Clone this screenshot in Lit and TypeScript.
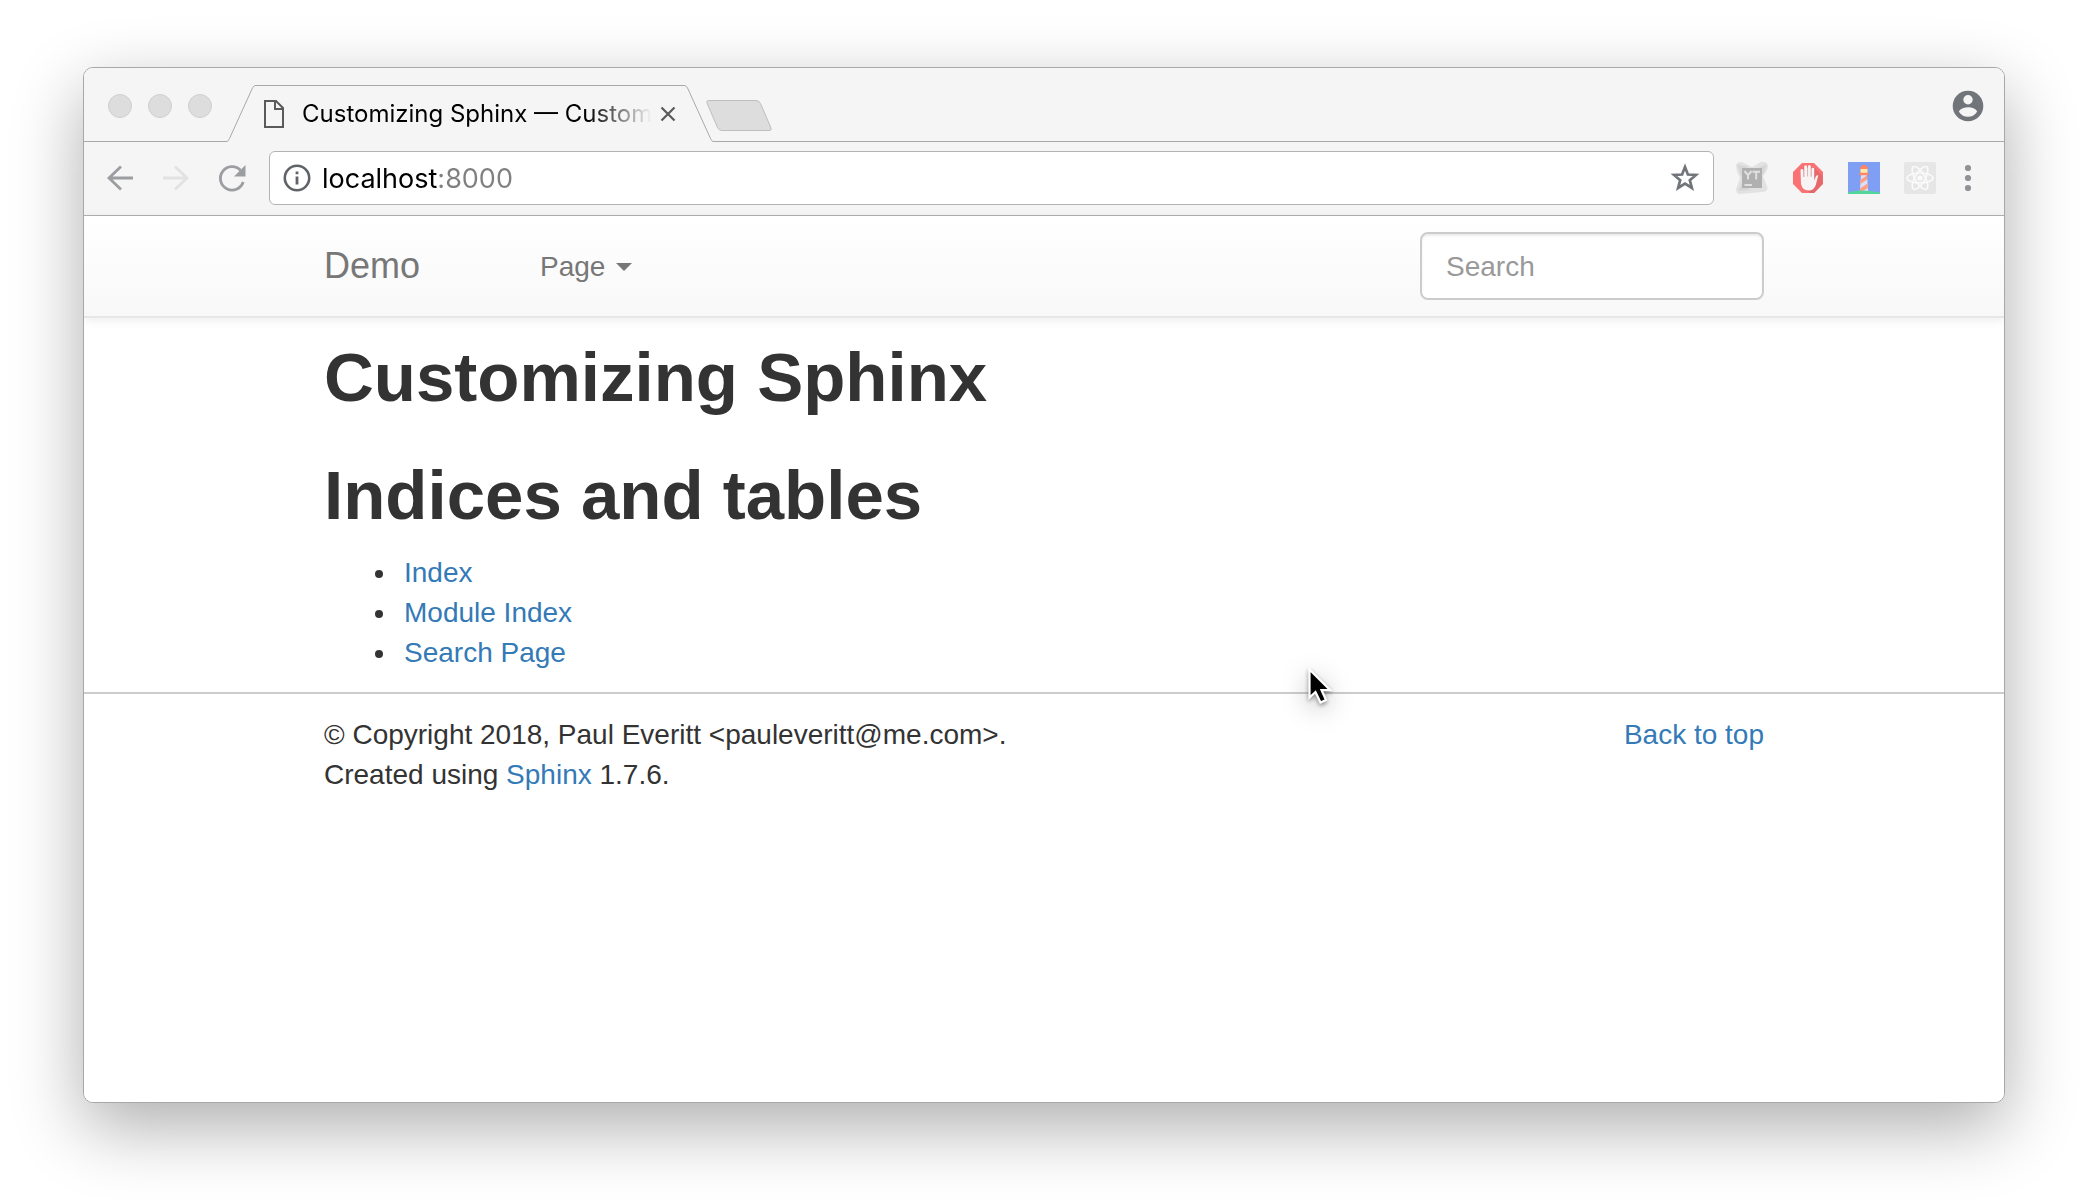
import { LitElement, html, css, svg } from "lit";
import { customElement, state } from "lit/decorators.js";

const petal = (angle: number) => svg`
  <ellipse cx="16" cy="16" rx="13" ry="5" transform="rotate(${angle} 16 16)"
    fill="none" stroke="#fafafa" stroke-width="1.6"></ellipse>`;

@customElement("browser-tabs")
class BrowserTabs extends LitElement {
  static styles = css`
    :host {
      display: block;
      font-family: Inter, "Liberation Sans", sans-serif;
    }
    .strip {
      display: flex;
      align-items: flex-end;
      height: 74px;
      box-sizing: border-box;
      padding: 0 20px 0 24px;
      background: #f5f5f5;
      border-bottom: 1px solid #a9a9a9;
    }
    .lights {
      display: flex;
      gap: 16px;
      align-self: center;
      padding-top: 2px;
      margin-right: 14px;
    }
    button {
      padding: 0;
      border: 0;
      background: none;
      font: inherit;
      color: inherit;
    }
    .light {
      width: 24px;
      height: 24px;
      box-sizing: border-box;
      border: 1px solid #cfcfcf;
      border-radius: 50%;
      background: #dddddd;
    }
    .tab {
      position: relative;
      display: flex;
      align-items: center;
      width: 488px;
      height: 57px;
      box-sizing: border-box;
      margin-bottom: -1px;
      padding: 0 38px;
    }
    .shape {
      position: absolute;
      inset: 0;
    }
    .file,
    .title,
    .close {
      position: relative;
    }
    .title {
      margin-left: 18px;
      white-space: nowrap;
      font-size: 24px;
      line-height: 32px;
      color: #000;
      -webkit-mask-image: linear-gradient(to left, transparent, #000 64px);
      mask-image: linear-gradient(to left, transparent, #000 64px);
    }
    .close {
      display: flex;
      margin-left: auto;
    }
    .add {
      display: flex;
      align-self: center;
      padding-top: 22px;
      margin-left: -8px;
    }
    .account {
      display: flex;
      align-self: center;
      padding-top: 2px;
      margin-left: auto;
    }
    svg {
      display: block;
    }
  `;

  render() {
    return html`
      <div class="strip">
        <div class="lights">
          <button class="light" aria-label="Close window"></button>
          <button class="light" aria-label="Minimize window"></button>
          <button class="light" aria-label="Zoom window"></button>
        </div>
        <div class="tab">
          <svg class="shape" width="488" height="57" viewBox="0 0 488 57" aria-hidden="true">
            <path d="M0 56.5C2 56.5 2.500 55.500 3.500 53.500L26 4C27.500 1 28 .5 30 .5H458C460 .5 460.500 1 462 4L484.500 53.500C485.500 55.500 486 56.500 488 56.500V57H0Z" fill="#f5f5f5"/>
            <path d="M0 56.5C2 56.5 2.500 55.500 3.500 53.500L26 4C27.500 1 28 .5 30 .5H458C460 .5 460.500 1 462 4L484.500 53.500C485.500 55.500 486 56.500 488 56.500" fill="none" stroke="#a9a9a9"/>
          </svg>
          <svg class="file" width="20" height="28" viewBox="0 0 20 28" aria-hidden="true">
            <path d="M1 1H12L19 8V27H1Z" fill="none" stroke="#5a5a5a" stroke-width="2"/>
            <path d="M11 1V9H19" fill="none" stroke="#5a5a5a" stroke-width="2"/>
          </svg>
          <span class="title">Customizing Sphinx — Custom</span>
          <button class="close" aria-label="Close tab">
            <svg width="16" height="16" viewBox="0 0 16 16">
              <path d="M1.500 1.500L14.500 14.500M14.500 1.500L1.500 14.500" stroke="#5a5a5a" stroke-width="2.200"/>
            </svg>
          </button>
        </div>
        <button class="add" aria-label="New tab">
          <svg width="66" height="32" viewBox="0 0 66 32">
            <path d="M3 .5H50Q53 .5 54.500 3.500L65 28Q66 30.500 63 30.500H16Q13 30.500 11.500 27.500L1 3Q0 .5 3 .5Z" fill="#dddddd" stroke="#bdbdbd"/>
          </svg>
        </button>
        <button class="account" aria-label="Account">
          <svg width="32" height="32" viewBox="0 0 32 32">
            <circle cx="16" cy="16" r="15.300" fill="#71757a"/>
            <circle cx="16" cy="9.700" r="4.700" fill="#f5f5f5"/>
            <path d="M6.800 21.500C8.500 18.500 12.500 17.200 16 17.200S23.500 18.500 25.200 21.500C23.200 24.800 20 26.800 16 26.800S8.800 24.800 6.800 21.500Z" fill="#f5f5f5"/>
          </svg>
        </button>
      </div>
    `;
  }
}

@customElement("browser-toolbar")
class BrowserToolbar extends LitElement {
  @state() private address = "localhost:8000";

  static styles = css`
    :host {
      display: block;
      font-family: Inter, "Liberation Sans", sans-serif;
    }
    .bar {
      display: flex;
      align-items: center;
      gap: 24px;
      padding: 9px 28px 10px 20px;
      background: #f5f5f5;
      border-bottom: 1px solid #b0b0b0;
    }
    button {
      display: flex;
      padding: 0;
      border: 0;
      background: none;
    }
    svg {
      display: block;
    }
    .omnibox {
      flex: 1;
      display: flex;
      align-items: center;
      gap: 10px;
      height: 54px;
      box-sizing: border-box;
      margin-left: -3px;
      padding: 0 12px;
      background: #fff;
      border: 1px solid #b3b3b3;
      border-radius: 6px;
    }
    .address {
      flex: 1;
      min-width: 0;
      padding: 2px 0 0;
      border: 0;
      outline: 0;
      font: 27px/36px Inter, "Liberation Sans", sans-serif;
      color: transparent;
      background: linear-gradient(to right, #000 116px, #808080 116px);
      -webkit-background-clip: text;
      background-clip: text;
    }
    .extensions {
      display: flex;
      align-items: center;
      gap: 24px;
      margin-left: -2px;
    }
  `;

  private onInput(e: Event) {
    this.address = (e.target as HTMLInputElement).value;
  }

  render() {
    return html`
      <div class="bar">
        <button aria-label="Back">
          <svg width="32" height="32" viewBox="0 0 32 32" fill="none" stroke="#9b9da0" stroke-width="2.800">
            <path d="M29 16H5M17 4.500L5 16L17 27.500"/>
          </svg>
        </button>
        <button aria-label="Forward" disabled>
          <svg width="32" height="32" viewBox="0 0 32 32" fill="none" stroke="#e2e2e2" stroke-width="2.800">
            <path d="M3 16H27M15 4.500L27 16L15 27.500"/>
          </svg>
        </button>
        <button aria-label="Reload">
          <svg width="32" height="32" viewBox="0 0 32 32">
            <path d="M27.200 20A11.700 11.700 0 1 1 24.500 8.200" fill="none" stroke="#9b9da0" stroke-width="2.800"/>
            <path d="M29.500 3V14.500H18Z" fill="#9b9da0"/>
          </svg>
        </button>
        <div class="omnibox">
          <svg width="30" height="30" viewBox="0 0 30 30" aria-hidden="true">
            <circle cx="15" cy="15" r="12.200" fill="none" stroke="#5f6368" stroke-width="2.600"/>
            <path d="M13.600 8.500H16.400V11.300H13.600ZM13.600 13.500H16.400V21.500H13.600Z" fill="#5f6368"/>
          </svg>
          <input class="address" type="text" aria-label="Address" spellcheck="false" .value=${this.address} @input=${this.onInput} />
          <button aria-label="Bookmark this page">
            <svg width="32" height="32" viewBox="0 0 32 32">
              <path d="M16 5L18.900 12.500L27 13L20.800 18.200L22.900 26L16 21.700L9.100 26L11.200 18.200L5 13L13.100 12.500Z" fill="none" stroke="#71757a" stroke-width="2.700"/>
            </svg>
          </button>
        </div>
        <div class="extensions">
          <button aria-label="YouTrack">
            <svg width="32" height="32" viewBox="0 0 32 32">
              <path d="M0 4Q0 0 6 0L16 5L25 0Q31 -1 32 4Q32 8 27 14L31 24Q33 30 26 30L4 32Q0 32 0 27L4 16Q0 8 0 4Z" fill="#e2e2e2"/>
              <path d="M1 2L12 5L5 14ZM31 2L22 6L27 13ZM2 29L6 20L14 28Z" fill="#d6d6d6"/>
              <rect x="6" y="6" width="20" height="20" fill="#b0b0b0"/>
              <path d="M8.500 9L12 13.200L15.500 9M12 13V17.500M16.500 9.800H24M20.200 10V17.500" fill="none" stroke="#e0e0e0" stroke-width="2"/>
              <path d="M8.500 22H16V24H8.500Z" fill="#e0e0e0"/>
            </svg>
          </button>
          <button aria-label="Ad blocker">
            <svg width="32" height="32" viewBox="0 0 32 32">
              <path d="M10 1H22L31 10V22L22 31H10L1 22V10Z" fill="#fb7275"/>
              <path d="M18 31L11 25L9 6L22 5L30.500 14V22L22 31Z" fill="#e5686b"/>
              <path d="M8.500 8.500Q8.500 6.800 10 6.800T11.400 8.500V15H12.200V5Q12.200 3.300 13.700 3.300T15.200 5V14.300H16V4.500Q16 3 17.400 3T18.800 4.500V14.500H19.500V7Q19.500 5.400 20.900 5.400T22.200 7V18.500L23.800 14.500Q24.800 12.800 26.300 13.300L23.800 23Q22 28.500 16.500 28.500Q10.500 28.500 9 22Z" fill="#f6f4f4"/>
              <path d="M11.800 9V15M15.600 6V14.500M19.200 7V15" stroke="#d9c9ca" stroke-width=".8"/>
            </svg>
          </button>
          <button aria-label="Lighthouse">
            <svg width="32" height="32" viewBox="0 0 32 32">
              <rect width="32" height="32" fill="#7f9ff5"/>
              <path d="M13 13H19L20.200 30H11.800Z" fill="#dfe0f2"/>
              <path d="M12.700 17.500L19 13.500L19.200 17.500L12.400 22ZM12 26.500L19.500 21.500L19.900 26L13 30H11.800Z" fill="#ff9d85"/>
              <rect x="12.500" y="7" width="7" height="4.500" fill="#ffe9a3"/>
              <path d="M12 7Q12.300 3 16 3T20 7ZM11.500 10.800H20.500V13.300H11.500Z" fill="#ff8564"/>
              <path d="M0 32V30.500Q8 28 16 28.500T32 30.500V32Z" fill="#52d79b"/>
            </svg>
          </button>
          <button aria-label="React Developer Tools">
            <svg width="32" height="32" viewBox="0 0 32 32">
              <rect width="32" height="32" rx="2" fill="#e6e6e6"/>
              ${petal(0)}${petal(60)}${petal(120)}
              <circle cx="16" cy="16" r="2.600" fill="#fafafa"/>
            </svg>
          </button>
          <button aria-label="Menu">
            <svg width="16" height="32" viewBox="0 0 16 32" fill="#8f9296">
              <circle cx="8" cy="6" r="3.100"/>
              <circle cx="8" cy="16" r="3.100"/>
              <circle cx="8" cy="26" r="3.100"/>
            </svg>
          </button>
        </div>
      </div>
    `;
  }
}

@customElement("sphinx-page")
class SphinxPage extends LitElement {
  static styles = css`
    :host {
      display: block;
      flex: 1;
      background: #fff;
      color: #333;
      font: 28px/40px "Liberation Sans", Arial, sans-serif;
    }
    .container {
      width: 100%;
      max-width: 1500px;
      box-sizing: border-box;
      margin: 0 auto;
      padding: 0 30px;
    }
    .navbar {
      background: linear-gradient(to bottom, #ffffff, #f8f8f8);
      border-bottom: 2px solid #e7e7e7;
      box-shadow: 0 2px 10px rgba(0, 0, 0, 0.08);
    }
    .nav {
      display: flex;
      align-items: center;
      gap: 120px;
      height: 100px;
    }
    .brand {
      font-size: 36px;
      color: #777;
    }
    .dropdown {
      display: flex;
      align-items: center;
      gap: 11px;
      padding: 2px 0 0;
      border: 0;
      background: none;
      font: inherit;
      color: #777;
    }
    .caret {
      border-top: 8px solid #777;
      border-left: 8px solid transparent;
      border-right: 8px solid transparent;
    }
    .search {
      margin-left: auto;
    }
    .field {
      display: block;
      width: 344px;
      height: 68px;
      box-sizing: border-box;
      padding: 2px 24px 0;
      border: 2px solid #ccc;
      border-radius: 8px;
      background: #fff;
      box-shadow: inset 0 2px 2px rgba(0, 0, 0, 0.075);
      font: inherit;
      color: #555;
    }
    .field::placeholder {
      color: #999;
      opacity: 1;
    }
    a {
      color: #337ab7;
      text-decoration: none;
    }
    .content {
      padding-top: 20px;
    }
    h1 {
      margin: 0;
      font-size: 69px;
      font-weight: 700;
      line-height: 79px;
    }
    h1 + h1 {
      margin-top: 39px;
    }
    ul {
      margin: 18px 0 19px;
      padding-left: 74px;
    }
    li {
      padding-left: 6px;
    }
    footer {
      padding: 21px 0;
      border-top: 2px solid #ccc;
    }
    .foot {
      display: flex;
      justify-content: space-between;
      align-items: flex-start;
    }
    .foot p {
      margin: 0;
    }
  `;

  private links = ["Index", "Module Index", "Search Page"];

  render() {
    return html`
      <nav class="navbar">
        <div class="container nav">
          <a class="brand" href="#">Demo</a>
          <button class="dropdown" aria-haspopup="true">Page<span class="caret"></span></button>
          <form class="search" role="search">
            <input class="field" type="text" placeholder="Search" aria-label="Search" />
          </form>
        </div>
      </nav>
      <main class="container content">
        <h1>Customizing Sphinx</h1>
        <h1>Indices and tables</h1>
        <ul>
          ${this.links.map((l) => html`<li><a href="#">${l}</a></li>`)}
        </ul>
      </main>
      <footer>
        <div class="container foot">
          <p>
            © Copyright 2018, Paul Everitt &lt;pauleveritt@me.com&gt;.<br />
            Created using <a href="#">Sphinx</a> 1.7.6.
          </p>
          <a href="#">Back to top</a>
        </div>
      </footer>
    `;
  }
}

@customElement("app-root")
class AppRoot extends LitElement {
  static styles = css`
    :host {
      display: flex;
      min-height: 100vh;
      box-sizing: border-box;
      padding: 67px 83px 99px;
      background: #fff;
    }
    .window {
      flex: 1;
      display: flex;
      flex-direction: column;
      min-width: 0;
      overflow: hidden;
      border: 1px solid #a8a8a8;
      border-radius: 10px;
      background: #fff;
      box-shadow: 0 24px 70px rgba(0, 0, 0, 0.32);
    }
    .pointer {
      position: absolute;
      left: 1302px;
      top: 659px;
      pointer-events: none;
      filter: drop-shadow(0 2px 2px rgba(0, 0, 0, 0.4)) drop-shadow(0 6px 12px rgba(0, 0, 0, 0.25));
    }
  `;

  render() {
    return html`
      <div class="window">
        <browser-tabs></browser-tabs>
        <browser-toolbar></browser-toolbar>
        <sphinx-page></sphinx-page>
      </div>
      <svg class="pointer" width="40" height="56" viewBox="0 0 40 56" aria-hidden="true">
        <path d="M7.500 10.500V38.500L13.500 33L18.500 43.500L24 41L19.500 31H28Z" fill="#000" stroke="#fff" stroke-width="2.200"/>
      </svg>
    `;
  }
}
